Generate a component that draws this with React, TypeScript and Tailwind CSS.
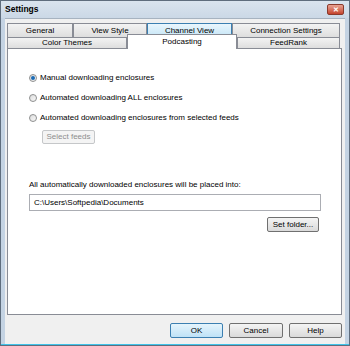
const font = { fontFamily: '"Liberation Sans", Arial, sans-serif' };

function Tab({ label, w, hover }: { label: string; w: string; hover?: boolean }) {
  return (
    <div
      className={`${w} flex items-center justify-center border border-b-0 text-[8px] leading-none text-black ${
        hover
          ? "border-[#3c7fb1] bg-gradient-to-b from-[#eaf6fd] to-[#c4e5f6]"
          : "border-[#898c95] bg-gradient-to-b from-[#f3f3f3] to-[#dedede]"
      }`}
    >
      {label}
    </div>
  );
}

function Radio({ checked, label }: { checked?: boolean; label: string }) {
  return (
    <div className="flex items-center gap-[3px] h-[9px]">
      <div className="w-[8px] h-[8px] rounded-full border border-[#8e8f8f] bg-gradient-to-br from-[#dcdcdc] to-[#f8f8f8] flex items-center justify-center">
        {checked && <div className="w-[4px] h-[4px] rounded-full bg-[#1a6bb5]" />}
      </div>
      <span className="text-[8px] leading-none text-black">{label}</span>
    </div>
  );
}

function Button({ label, w, focus, disabled }: { label: string; w: string; focus?: boolean; disabled?: boolean }) {
  return (
    <div
      className={`${w} flex items-center justify-center rounded-[2px] border text-[8px] leading-none ${
        disabled
          ? "border-[#c5c7c9] bg-[#f4f4f4] text-[#8d8d8d]"
          : focus
          ? "border-[#3c7fb1] bg-gradient-to-b from-[#e5f4fc] to-[#bfe2f6] text-black"
          : "border-[#707070] bg-gradient-to-b from-[#f4f4f4] to-[#dadada] text-black"
      }`}
    >
      {label}
    </div>
  );
}

export default function App() {
  return (
    <div style={font} className="w-[350px] h-[346px] bg-[#c4d3e3] border border-[#5f6d7d] flex flex-col">
      <div className="h-[17px] flex items-center justify-between pl-[4px] pr-[5px] bg-gradient-to-b from-[#dae4ee] to-[#cbd8e6]">
        <span className="text-[8.5px] font-bold text-black">Settings</span>
        <div className="w-[17px] h-[11px] rounded-[2px] border border-[#8a3a2c] bg-gradient-to-b from-[#e8a293] to-[#c4422c] flex items-center justify-center text-white text-[7px] font-bold leading-none">
          ✕
        </div>
      </div>
      <div className="flex-1 mx-[4px] bg-[#f0f0f0] border-t border-[#a7b3c0] flex flex-col pl-[2px] pr-[3px] pt-[4px]">
        <div className="h-[25px] flex flex-col">
          <div className="flex h-[14px]">
            <Tab label="General" w="w-[66px]" />
            <Tab label="View Style" w="w-[74px]" />
            <Tab label="Channel View" w="w-[85px]" hover />
            <Tab label="Connection Settings" w="w-[108px]" />
          </div>
          <div className="flex h-[11px]">
            <Tab label="Color Themes" w="w-[120px]" />
            <div className="w-[110px] -mt-[3px] h-[15px] relative z-10 flex items-start pt-[3px] justify-center bg-white border border-[#898c95] border-b-0 text-[8px] leading-none">
              Podcasting
            </div>
            <Tab label="FeedRank" w="w-[103px]" />
          </div>
        </div>
        <div className="h-[267px] bg-white border border-[#898c95] flex flex-col pl-[21px] pr-[20px]">
          <div className="flex flex-col gap-[11px] pt-[24px]">
            <Radio checked label="Manual downloading enclosures" />
            <Radio label="Automated downloading ALL enclosures" />
            <Radio label="Automated downloading enclosures from selected feeds" />
          </div>
          <div className="pl-[13px] pt-[8px]">
            <Button label="Select feeds" w="w-[53px] h-[14px]" disabled />
          </div>
          <div className="mt-[36px] h-[10px] text-[8px] leading-[10px] text-black">
            All automatically downloaded enclosures will be placed into:
          </div>
          <div className="mt-[4px] h-[17px] border border-[#abadb3] flex items-center pl-[4px] text-[8px] leading-none">
            C:\Users\Softpedia\Documents
          </div>
          <div className="flex justify-end mt-[6px] pr-[2px]">
            <Button label="Set folder..." w="w-[52px] h-[15px]" />
          </div>
        </div>
        <div className="flex justify-end gap-[6px] pt-[8px]">
          <Button label="OK" w="w-[53px] h-[15px]" focus />
          <Button label="Cancel" w="w-[54px] h-[15px]" />
          <Button label="Help" w="w-[53px] h-[15px]" />
        </div>
      </div>
      <div className="h-[1px] bg-[#3fc3ea]" />
    </div>
  );
}
